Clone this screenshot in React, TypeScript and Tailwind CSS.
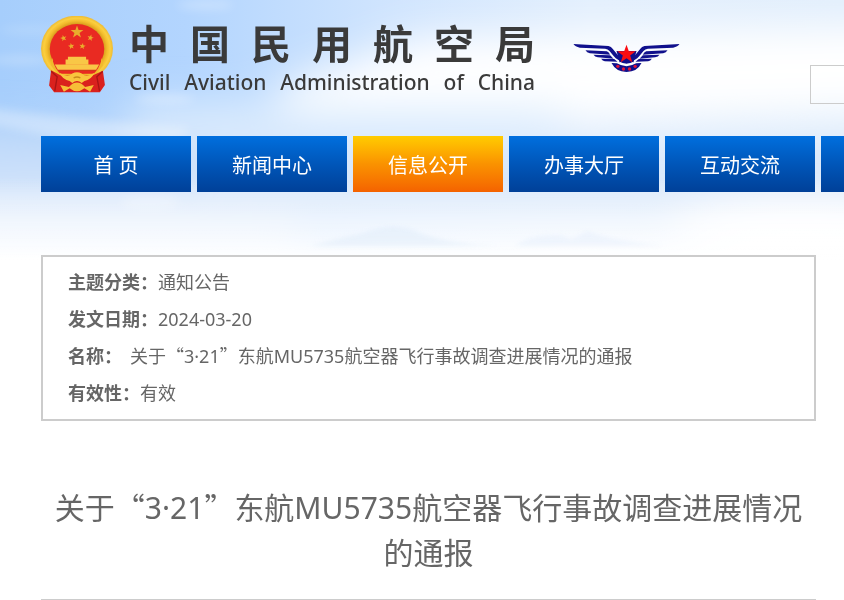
import type { ReactNode } from 'react'
import clsx from 'clsx'

const navItems = [
  { label: '首 页' },
  { label: '新闻中心' },
  { label: '信息公开', active: true },
  { label: '办事大厅' },
  { label: '互动交流' },
]

const star = 'M0 -10 L2.4 -3.2 L9.5 -3.1 L3.8 1.2 L5.9 8.1 L0 4 L-5.9 8.1 L-3.8 1.2 L-9.5 -3.1 L-2.4 -3.2 Z'

function Sky() {
  return (
    <svg
      className="absolute inset-x-0 top-0 -z-10 h-[260px] w-full"
      viewBox="0 0 844 260"
      preserveAspectRatio="none"
      aria-hidden="true"
    >
      <defs>
        <linearGradient id="sky" x1="0" x2="1" y1="0" y2="0">
          <stop offset="0" stopColor="#a6cefc" />
          <stop offset="0.22" stopColor="#b3d5fe" />
          <stop offset="0.45" stopColor="#cfe4fe" />
          <stop offset="0.7" stopColor="#e3effd" />
          <stop offset="1" stopColor="#e1eefc" />
        </linearGradient>
        <linearGradient id="fade" x1="0" x2="0" y1="0" y2="1">
          <stop offset="0.68" stopColor="#fff" stopOpacity="0" />
          <stop offset="0.85" stopColor="#fff" stopOpacity="0.6" />
          <stop offset="1" stopColor="#fff" />
        </linearGradient>
        <filter id="soft" x="-50%" y="-50%" width="200%" height="200%">
          <feGaussianBlur stdDeviation="20" />
        </filter>
        <filter id="wisp" x="-50%" y="-50%" width="200%" height="200%">
          <feGaussianBlur stdDeviation="5" />
        </filter>
        <filter id="haze" x="-20%" y="-20%" width="140%" height="140%">
          <feGaussianBlur stdDeviation="2" />
        </filter>
      </defs>
      <rect width="844" height="260" fill="url(#sky)" />
      <g filter="url(#soft)">
        <path d="M270 90 L420 38 L900 25 V112 L560 120 L300 112 Z" fill="#fff" />
        <path d="M-60 125 L150 135 H300 V175 H-60 Z" fill="#c6ddf9" />
        <path d="M-60 180 H300 V300 H-60 Z" fill="#dce9fb" />
        <path d="M130 105 H560 V135 H130 Z" fill="#e0effe" />
        <path d="M200 145 H900 V225 H200 Z" fill="#d9e8fb" />
        <ellipse cx="800" cy="235" rx="130" ry="35" fill="#fff" />
      </g>
      <g filter="url(#wisp)" fill="#fff">
        <ellipse cx="30" cy="30" rx="30" ry="4" opacity="0.15" />
        <ellipse cx="20" cy="60" rx="30" ry="5" opacity="0.2" />
        <ellipse cx="205" cy="5" rx="28" ry="5" opacity="0.25" />
        <ellipse cx="165" cy="99" rx="30" ry="4" opacity="0.3" />
        <path d="M-10 108 Q60 118 190 128 L180 138 H60 L-10 124 Z" opacity="0.3" />
        <ellipse cx="150" cy="202" rx="30" ry="8" opacity="0.25" />
      </g>
      <rect width="844" height="260" fill="url(#fade)" />
      <g filter="url(#haze)" fill="#dce8f8">
        <path d="M310 246 Q340 238 362 233 Q396 220 420 233 Q450 244 500 246 Z" opacity="0.45" />
        <path d="M515 246 Q530 234 560 235 L572 239 L587 231 Q610 240 665 246 Z" opacity="0.35" />
      </g>
    </svg>
  )
}

function Emblem() {
  return (
    <svg className="h-[77px] w-[72px] shrink-0" viewBox="37 35 214 229" role="img" aria-label="国徽">
      <defs>
        <radialGradient id="gold" cx="0.5" cy="0.5" r="0.5">
          <stop offset="0.74" stopColor="#d79b1c" />
          <stop offset="0.84" stopColor="#f3bd2d" />
          <stop offset="0.92" stopColor="#fbcf3f" />
          <stop offset="1" stopColor="#eebb34" />
        </radialGradient>
      </defs>
      <ellipse cx="144" cy="132" rx="107" ry="98" fill="url(#gold)" />
      <ellipse cx="144" cy="133" rx="81" ry="74" fill="#e92a22" />
      <path d="M70 160 Q80 200 110 212 H178 Q208 200 218 160 L222 180 L190 225 H98 L66 180 Z" fill="#f0bb2d" />
      <path d="M72 168 H216 Q210 190 194 207 H94 Q78 190 72 168 Z" fill="#e92a22" />
      <path d="M117 156 H171 V164 H178 V180 H110 V164 H117 Z" fill="#f9c746" />
      <path d="M78 179 H210 L201 195 H87 Z" fill="#f9c746" />
      <path d="M88 197 H200" stroke="#cf3b18" strokeWidth="3" />
      <g fill="#e9ac2c">
        <path d={star} transform="translate(144 83) scale(2)" />
        <path d={star} transform="translate(104 101) rotate(-15)" />
        <path d={star} transform="translate(184 100) rotate(15)" />
        <path d={star} transform="translate(127 125) rotate(-10)" />
        <path d={star} transform="translate(160 125) rotate(10)" />
      </g>
      <path d="M67 196 L96 212 L190 212 L221 198 L227 240 L212 262 H76 L61 242 Z" fill="#da211d" />
      <path d="M67 199 L85 216 L78 258 M220 200 L203 216 L211 258" stroke="#a91414" strokeWidth="4" fill="none" />
      <path d="M92 204 Q116 220 130 206 Q144 199 158 206 Q172 220 196 204 Q186 226 166 228 L158 234 Q144 222 130 234 L122 228 Q102 226 92 204 Z" fill="#f9c63d" />
      <path d="M94 240 L120 246 Q132 233 144 233 Q156 233 168 246 L194 240 L183 260 L166 250 Q144 268 122 250 L105 260 Z" fill="#f7be37" />
      <path d="M134 219 Q144 214 154 219" stroke="#c98b1b" strokeWidth="4" fill="none" />
    </svg>
  )
}

function WingFeathers() {
  return (
    <>
      <path d="M41 71 L146 77 Q154 79 159 86 L193 127 Q172 120 162 108 L149 92 Q144 86 136 85 L60 82 Q46 79 41 71 Z" />
      <path d="M77 90 L141 93 Q147 95 151 103 L90 99 Q81 97 77 90 Z" />
      <path d="M101 103 L151 105 L161 115 L114 111 Q105 109 101 103 Z" />
      <path d="M124 115 L163 116 L173 124 L135 123 Q128 121 124 115 Z" />
    </>
  )
}

function Wings() {
  return (
    <svg className="h-7 w-[107px] shrink-0" viewBox="40 71 320 84" role="img" aria-label="民航徽标">
      <g fill="#10108c">
        <WingFeathers />
        <g transform="matrix(-1 0 0 1 400 0)">
          <WingFeathers />
        </g>
        <path d="M170 92 H230 L221 126 Q200 136 179 126 Z" />
        <path d="M155 128 L171 129 Q200 146 229 129 L245 128 Q233 154 200 155 Q168 154 155 128 Z" />
      </g>
      <path d="M180 127 Q200 138 220 127" stroke="#fff" strokeWidth="4" fill="none" />
      <path d={star} transform="translate(200 102) scale(2.9)" fill="#fb0d12" />
      <g fill="#e0153a">
        <circle cx="174" cy="138" r="5" />
        <circle cx="191" cy="146" r="5" />
        <circle cx="209" cy="146" r="5" />
        <circle cx="226" cy="138" r="5" />
      </g>
    </svg>
  )
}

// full-width quotation marks only come from the CJK font
function Quote({ children }: { children: ReactNode }) {
  return <span className="font-['Noto_Sans_CJK_SC',sans-serif] leading-none">{children}</span>
}

function NoticeName() {
  return (
    <>
      关于<Quote>“</Quote>3·21<Quote>”</Quote>东航MU5735航空器飞行事故调查进展情况的通报
    </>
  )
}

function Field({ label, children }: { label: string; children: ReactNode }) {
  return (
    <div className="flex">
      <dt className="shrink-0 font-bold">{label}：</dt>
      <dd>{children}</dd>
    </div>
  )
}

export default function App() {
  return (
    <div className="relative isolate overflow-hidden bg-white font-['Noto_Sans','Noto_Sans_CJK_SC',sans-serif] text-[#666]">
      <Sky />
      <header className="pl-[41px]">
        <div className="flex h-34 items-start pt-4">
          <a href="#" className="flex shrink-0 items-start gap-4 text-[#3a3a3a]">
            <Emblem />
            <div className="w-[406px]">
              <h1 className="flex justify-between pt-1.5 text-[40px] leading-11 font-bold">
                {[...'中国民用航空局'].map((char) => (
                  <span key={char}>{char}</span>
                ))}
              </h1>
              <p className="mt-1 flex justify-between text-[21px] leading-6 font-medium">
                {'Civil Aviation Administration of China'.split(' ').map((word) => (
                  <span key={word}>{word}</span>
                ))}
              </p>
            </div>
          </a>
          <div className="ml-[38px] shrink-0 pt-7">
            <Wings />
          </div>
          <input
            type="search"
            aria-label="搜索"
            className="mt-[49px] ml-[130px] h-[39px] w-72 shrink-0 border border-[#ccc] bg-transparent px-3"
          />
        </div>
        <nav className="flex gap-1.5">
          {navItems.map((item) => (
            <a
              key={item.label}
              href="#"
              className={clsx(
                'w-[150px] shrink-0 bg-linear-to-b pt-1 text-center text-xl leading-13 text-white',
                item.active ? 'from-[#ffcc00] via-[#fa9200] to-[#f46200]' : 'from-[#006fde] via-[#0056b9] to-[#004098]'
              )}
            >
              {item.label}
            </a>
          ))}
          <div className="w-[150px] shrink-0 bg-linear-to-b from-[#006fde] via-[#0056b9] to-[#004098]" />
        </nav>
      </header>

      <main className="mt-[63px] mr-7 ml-[41px]">
        <dl className="border-2 border-[#ccc] bg-white px-[25px] py-[7px] text-lg leading-[37px]">
          <Field label="主题分类">通知公告</Field>
          <Field label="发文日期">2024-03-20</Field>
          <Field label="名称">
            <span className="pl-2"><NoticeName /></span>
          </Field>
          <Field label="有效性">有效</Field>
        </dl>
        <h2 className="mt-16 border-b border-[#ccc] pb-6 text-center text-3xl leading-[45px]">
          <NoticeName />
        </h2>
      </main>
    </div>
  )
}
